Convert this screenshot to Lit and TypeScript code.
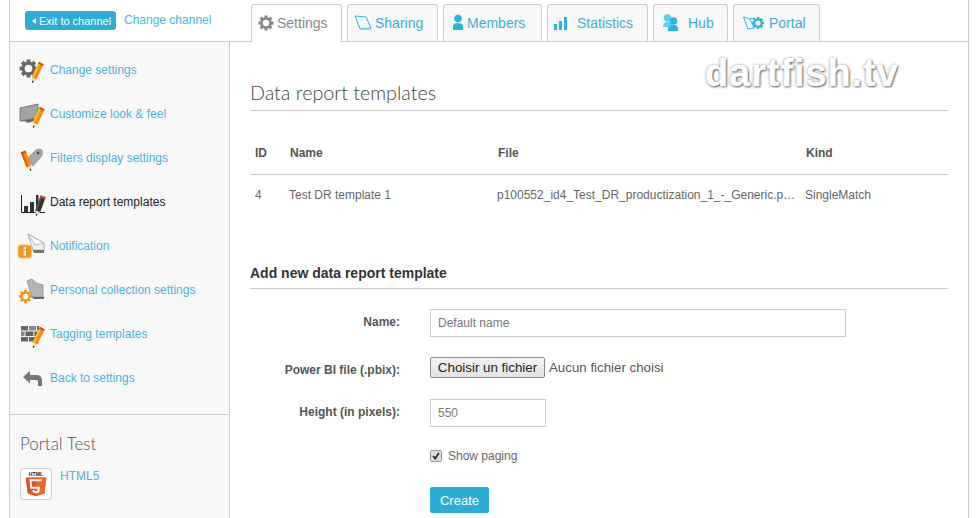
import { LitElement, html, css, svg } from "lit";
import { customElement } from "lit/decorators.js";

const pencil = (x: number, y: number, a = 25, body = "#f58a12", hi = "#fcc419", len = 22) => svg`<g transform="translate(${x} ${y}) rotate(${a})">
  <rect x="-2.6" y="${-len}" width="5.2" height="${len - 5}" fill="${body}"/><rect x="-2.6" y="${-len}" width="1.8" height="${len - 5}" fill="${hi}"/>
  <rect x="-2.6" y="${-len}" width="5.2" height="2" fill="#d9480f"/>
  <path d="M-2.6 -5 H2.6 L0 0Z" fill="#ecd9b8"/><path d="M-1 -2 H1 L0 0Z" fill="#111"/></g>`;
const gear = (cx: number, cy: number, r: number, fill: string) => {
  const tw = r * 0.42;
  const teeth = [0, 45, 90, 135, 180, 225, 270, 315].map(
    (a) => svg`<rect x="${cx - tw / 2}" y="${cy - r}" width="${tw}" height="${r * 0.45}" fill="${fill}" transform="rotate(${a} ${cx} ${cy})"/>`
  );
  return svg`${teeth}<circle cx="${cx}" cy="${cy}" r="${r * 0.6}" fill="none" stroke="${fill}" stroke-width="${r * 0.34}"/>`;
};

const navIcons = {
  gear: svg`${gear(9.5, 11.5, 9, "#666")}${pencil(13, 26)}`,
  monitor: svg`<path d="M1 7 L19 3 V17 L1 20Z" fill="#a3a3a3" stroke="#666" stroke-width="0.8"/><path d="M1 20 L19 17 V19 L8 22 L7 20.5Z" fill="#666"/>${pencil(14, 27)}`,
  tag: svg`<path d="M9 13 L17 5 Q21 3 23 5 Q24 9 22 12 L14 21 Z" fill="#a8a8a8" stroke="#8a8a8a" stroke-width="0.8"/><circle cx="19" cy="8" r="1.4" fill="#555"/>${pencil(12, 26, -22, "#f58a12", "#e8590c", 21)}`,
  chart: svg`<path d="M2.5 6 V23.5 H26" fill="none" stroke="#222"/><rect x="5" y="17" width="4" height="6" fill="#333"/><rect x="11" y="13" width="4" height="10" fill="#333"/><rect x="17" y="6" width="2.5" height="15" fill="#333"/>${pencil(17, 27, 20, "#333", "#555", 21)}`,
  mail: svg`<path d="M9 1 L25 10 V17 L14 17Z" fill="#f2f2f2" stroke="#999" stroke-width="0.8"/><path d="M9 1 L25 10 L16 12Z" fill="#fff" stroke="#aaa" stroke-width="0.8"/><path d="M14 17 H25 V20 H15Z" fill="#777"/><rect x="-1" y="12" width="13.5" height="13" rx="2.5" fill="#f7941d" stroke="#fbc27a"/><rect x="4.6" y="14.2" width="2.4" height="2.2" fill="#fff"/><rect x="4.6" y="17.4" width="2.4" height="5.4" fill="#fff"/>`,
  folder: svg`<path d="M8 4 L13 2 L17 6 L24 8 V20 H13Z" fill="#b5b5b5" stroke="#8a8a8a" stroke-width="0.8"/><path d="M13 20 H25 V22 H15Z" fill="#666"/>${gear(6.5, 19.5, 6.5, "#f7941d")}`,
  grid: svg`<g fill="#666"><rect x="2" y="5" width="7" height="4.5"/><rect x="10" y="5" width="7" height="4.5" fill="#8a8a8a"/><rect x="18" y="5" width="2" height="4.5"/><rect x="2" y="10.5" width="3.5" height="4.5" fill="#8a8a8a"/><rect x="6.5" y="10.5" width="8" height="4.5"/><rect x="15.5" y="10.5" width="2.5" height="4.5"/><rect x="2" y="16" width="7" height="4.5"/><rect x="10" y="16" width="6" height="4.5"/></g>${pencil(14, 27)}`,
  back: svg`<path d="M4 12 L11 6 V10 H18 Q23 10 23 16 V21 H19 V17 Q19 15 17 15 H11 V18.5Z" fill="#777"/>`,
};

const tabIcon = {
  gear: svg`${gear(8, 9, 7.5, "#888")}`,
  sharing: svg`<path d="M1 2 L12 3 L17 14 L6 15Z" fill="#eefafd" stroke="#2fb4d8"/><path d="M6 15 L17 14 L18 16 H8Z" fill="#8ed8ec"/>`,
  member: svg`<circle cx="8" cy="4.6" r="3.8" fill="#2bb5dc"/><path d="M3 16 V12 Q3 9 8 9 Q13 9 13 12 V16Z" fill="#2bb5dc"/>`,
  stats: svg`<g fill="#2bb5dc"><rect x="0" y="10" width="3" height="6"/><rect x="5" y="7" width="3" height="9"/><rect x="10" y="3" width="3" height="13"/></g>`,
  hub: svg`<g transform="translate(3 0)"><circle cx="4.5" cy="4" r="3.8" fill="#5bd0ea"/><path d="M0 13 Q0 8 5 8 Q8 8 9 10 V13Z" fill="#5bd0ea"/><circle cx="10.5" cy="7" r="3.8" fill="#2bb5dc"/><path d="M5 17 V15 Q5 11 10.5 11 Q15 11 15 15 V17Z" fill="#2bb5dc"/></g>`,
  portal: svg`<g transform="translate(3 0)"><path d="M0.5 3 L7 5 L11 14 L5 15 Z" fill="#eefafd" stroke="#2fb4d8"/><path d="M7 5 L12 4" stroke="#2fb4d8" fill="none"/>${gear(15, 9, 6, "#2bb5dc")}</g>`,
};

const NAV: [string, keyof typeof navIcons, boolean][] = [
  ["Change settings", "gear", false],
  ["Customize look & feel", "monitor", false],
  ["Filters display settings", "tag", false],
  ["Data report templates", "chart", true],
  ["Notification", "mail", false],
  ["Personal collection settings", "folder", false],
  ["Tagging templates", "grid", false],
  ["Back to settings", "back", false],
];

const TABS: [string, keyof typeof tabIcon, number, number, number][] = [
  ["Settings", "gear", 91, 16, 3],
  ["Sharing", "sharing", 91, 18, 3],
  ["Members", "member", 99, 16, 1],
  ["Statistics", "stats", 101, 16, 7],
  ["Hub", "hub", 75, 20, 8],
  ["Portal", "portal", 87, 24, 5],
];

@customElement("app-root")
export class AppRoot extends LitElement {
  static styles = css`
    :host { display: block; width: 977px; height: 518px; overflow: hidden; background: #fff; font-family: "Liberation Sans", Arial, sans-serif; font-size: 12px; color: #555; }
    * { box-sizing: border-box; }
    .frame { position: relative; margin-left: 9px; width: 960px; height: 518px; border-left: 1px solid #ccc; border-right: 1px solid #ccc; display: flex; flex-direction: column; }
    .top { height: 42px; flex: none; border-bottom: 1px solid #ccc; display: flex; }
    .top-left { width: 241px; flex: none; display: flex; align-items: flex-start; padding: 11px 0 0 15px; gap: 8px; }
    .exit { height: 19px; width: 91px; background: #2dadd4; color: #fff; border-radius: 3px; font-size: 11px; display: flex; align-items: center; gap: 3px; padding-left: 7px; white-space: nowrap; }
    .tri { width: 0; height: 0; border: 3px solid transparent; border-left-width: 0; border-right: 4px solid #fff; }
    .change { font-size: 12px; color: #4db3da; line-height: 18px; white-space: nowrap; }
    .tabs { display: flex; gap: 5px; padding-top: 4px; align-items: flex-start; }
    .tab { height: 37px; background: #f8f8f8; border: 1px solid #ccc; border-bottom: none; border-radius: 3px 3px 0 0; display: flex; align-items: center; padding: 0 0 1px 6px; font-size: 14px; color: #3eaed6; }
    .tab.on { background: #fff; color: #888; height: 38px; padding-bottom: 2px; position: relative; }
    .tab svg { flex: none; display: block; overflow: visible; }
    .body { flex: 1; display: flex; min-height: 0; }
    .side { width: 220px; flex: none; background: #f8f8f8; border-right: 1px solid #ccc; display: flex; flex-direction: column; }
    .nav { height: 373px; flex: none; padding: 6px 0 0 9px; border-bottom: 1px solid #ccc; }
    .item { height: 44px; display: flex; align-items: center; gap: 4px; color: #4db3da; font-size: 12px; white-space: nowrap; }
    .item.on { color: #222; }
    .item svg { flex: none; display: block; overflow: visible; }
    .portal { padding: 19px 0 0 10px; }
    .portal h4 { margin: 0; font: 300 17px/20px Lato, sans-serif; color: #555; }
    .pitem { display: flex; gap: 8px; margin-top: 14px; color: #4db3da; font-size: 12px; line-height: 16px; }
    .badge { width: 32px; height: 32px; background: #fff; border: 1px solid #ccc; border-radius: 3px; flex: none; display: block; }
    .main { flex: 1; padding: 0 20px; min-width: 0; }
    h1 { margin: 0; height: 69px; padding-top: 39px; border-bottom: 1px solid #ccc; font: 300 19.7px/24px Lato, sans-serif; color: #444; }
    table { width: 100%; border-collapse: collapse; table-layout: fixed; }
    th { height: 63px; padding: 0 0 14px 5px; vertical-align: bottom; text-align: left; font-size: 12px; font-weight: bold; color: #555; border-bottom: 1px solid #ccc; }
    td { height: 42px; padding: 0 5px 0 4px; font-size: 12px; color: #666; white-space: nowrap; overflow: hidden; text-overflow: ellipsis; }
    th:first-child { padding-left: 5px; }
    td:first-child { padding-left: 5px; }
    h3 { margin: 43px 0 0; height: 30px; padding-top: 6px; font-size: 14px; line-height: 16px; font-weight: bold; color: #333; border-bottom: 1px solid #ccc; }
    .form { display: grid; grid-template-columns: 150px 1fr; column-gap: 30px; padding-top: 20px; }
    .lab { text-align: right; font-weight: bold; font-size: 12px; color: #555; }
    .inp { height: 28px; border: 1px solid #ccc; background: #fff; color: #777; padding: 0 7px; font: 12px "Liberation Sans", Arial, sans-serif; display: block; outline: none; }
    .r1 { width: 416px; }
    .r3 { width: 116px; }
    .file { display: flex; align-items: center; gap: 4px; height: 21px; font-size: 13.3px; color: #555; white-space: nowrap; }
    .file button { height: 21px; width: 115px; padding: 0; font: 13.33px "Liberation Sans", Arial, sans-serif; color: #222; background: linear-gradient(#f4f4f4, #e3e3e3); border: 1px solid #8a8a8a; border-radius: 2px; }
    .chk { display: flex; align-items: center; gap: 6px; height: 14px; color: #666; font-size: 12px; }
    .box { width: 12px; height: 12px; background: #ddd; border: 1px solid #999; border-radius: 2px; display: block; flex: none; }
    .create { display: block; width: 59px; height: 26px; border: none; padding: 0; border-radius: 2px; background: #2dadd4; color: #fff; font: 13px "Liberation Sans", Arial, sans-serif; }
    .g1 { margin-bottom: 20px; } .g2 { margin-bottom: 21px; } .g3 { margin-bottom: 22px; } .g4 { margin-bottom: 24px; }
    .logo { position: absolute; left: 695px; top: 49px; font: bold 38px/48px "Liberation Sans", Arial, sans-serif; color: #fff; letter-spacing: 0.9px; -webkit-text-stroke: 0.4px #fff; text-shadow: 1px 1px 2px #555, 0 0 3px #888; white-space: nowrap; }
  `;

  render() {
    return html`<div class="frame">
      <div class="top">
        <div class="top-left">
          <div class="exit"><span class="tri"></span>Exit to channel</div>
          <div class="change">Change channel</div>
        </div>
        <div class="tabs">
          ${TABS.map(([t, ic, w, iw, gap], i) => html`<div class="tab ${i === 0 ? "on" : ""}" style="width:${w}px;gap:${gap}px">
            <svg width="${iw}" height="18" viewBox="0 0 ${iw} 18">${tabIcon[ic]}</svg>${t}</div>`)}
        </div>
      </div>
      <div class="body">
        <div class="side">
          <div class="nav">
            ${NAV.map(([t, ic, on]) => html`<div class="item ${on ? "on" : ""}"><svg width="27" height="26" viewBox="0 0 27 26">${navIcons[ic]}</svg>${t}</div>`)}
          </div>
          <div class="portal">
            <h4>Portal Test</h4>
            <div class="pitem">
              <svg class="badge" viewBox="0 0 32 32">
                <text x="16" y="7" font-size="5.5" font-weight="bold" text-anchor="middle" font-family="Liberation Sans" fill="#222">HTML</text>
                <path d="M5 9 H27 L25 26 L16 29 L7 26Z" fill="#e44d26"/><path d="M16 9 H27 L25 26 L16 29Z" fill="#f16529"/>
                <path d="M22 12 H10 L11 20 H19 L18.6 24 L16 25 L13.4 24 L13.2 22.5" fill="none" stroke="#fff" stroke-width="2"/>
              </svg>
              <span>HTML5</span>
            </div>
          </div>
        </div>
        <div class="main">
          <h1>Data report templates</h1>
          <table>
            <colgroup><col style="width:35px"><col style="width:208px"><col style="width:308px"><col></colgroup>
            <thead><tr><th>ID</th><th>Name</th><th>File</th><th>Kind</th></tr></thead>
            <tbody><tr><td>4</td><td>Test DR template 1</td><td>p100552_id4_Test_DR_productization_1_-_Generic.pbix</td><td>SingleMatch</td></tr></tbody>
          </table>
          <h3>Add new data report template</h3>
          <div class="form">
            <div class="lab" style="padding-top:6px">Name:</div>
            <div class="g1"><input class="inp r1" value="Default name" /></div>
            <div class="lab" style="padding-top:6px">Power BI file (.pbix):</div>
            <div class="g2 file"><button>Choisir un fichier</button><span>Aucun fichier choisi</span></div>
            <div class="lab" style="padding-top:6px">Height (in pixels):</div>
            <div class="g3"><input class="inp r3" value="550" /></div>
            <div></div>
            <div class="g4 chk"><svg class="box" viewBox="0 0 12 12"><path d="M2.5 6 L5 9 L9.5 2.5" fill="none" stroke="#222" stroke-width="2"/></svg>Show paging</div>
            <div></div>
            <button class="create">Create</button>
          </div>
        </div>
      </div>
      <div class="logo">dartfish.tv</div>
    </div>`;
  }
}
